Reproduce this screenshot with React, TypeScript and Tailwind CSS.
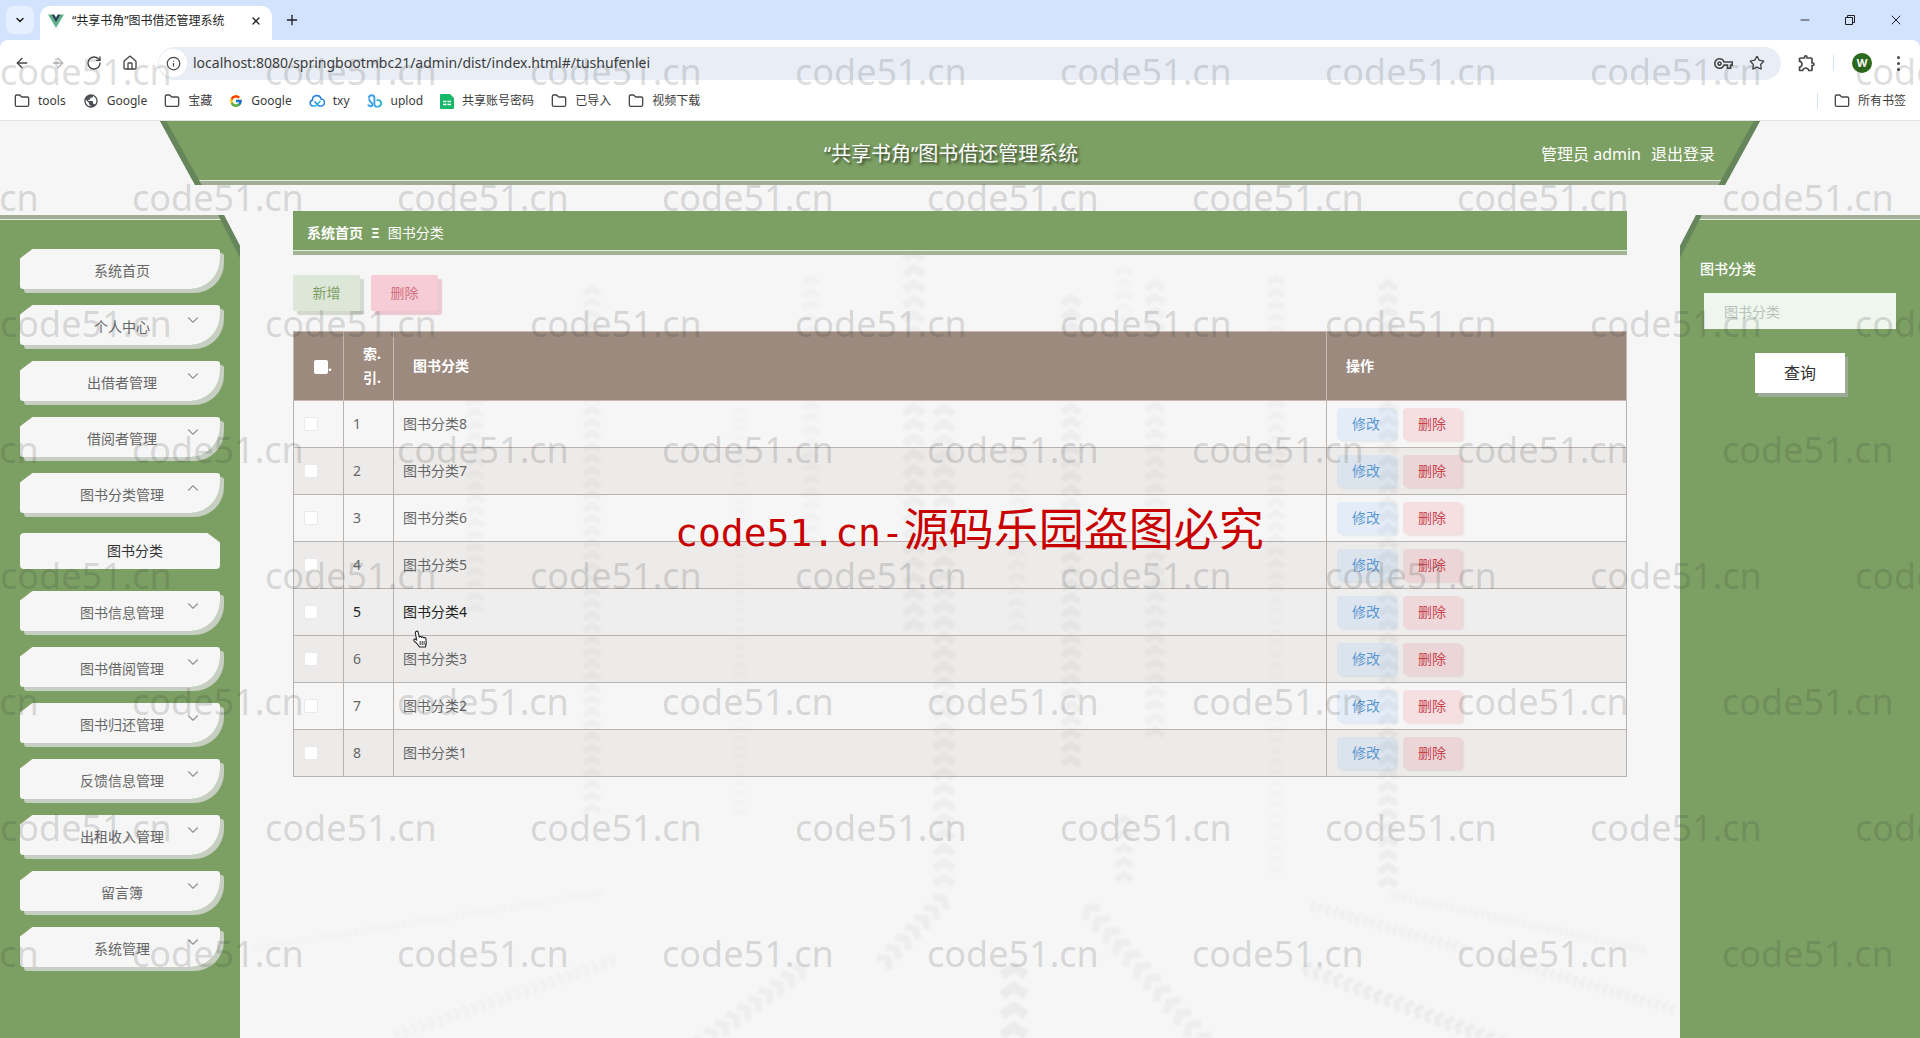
import React from "react";
import {
  ArrowLeft,
  ArrowRight,
  ChevronDown,
  ChevronUp,
  Folder,
  House,
  Info,
  Minus,
  Plus,
  RotateCw,
  Star,
  X,
} from "lucide-react";
import { FcGoogle } from "react-icons/fc";
import { MdOutlineExtension, MdOutlineVpnKey, MdPublic } from "react-icons/md";

const menuTop = ["系统首页", "个人中心", "出借者管理", "借阅者管理", "图书分类管理"];
const menuBottom = [
  "图书信息管理",
  "图书借阅管理",
  "图书归还管理",
  "反馈信息管理",
  "出租收入管理",
  "留言簿",
  "系统管理",
];
const rows = [8, 7, 6, 5, 4, 3, 2, 1].map((n, i) => ({ index: i + 1, name: `图书分类${n}` }));

/* Tyre tracks of the page background: x1, y1, x2, y2, chevron size, opacity */
const tracks: number[][] = [
  [475, 280, 475, 500, 8, 0.025],
  [592, 170, 592, 700, 8, 0.028],
  [740, 290, 740, 700, 6, 0.01],
  [811, 160, 811, 434, 8, 0.02],
  [914, 135, 914, 520, 10, 0.03],
  [944, 290, 944, 775, 10, 0.032],
  [942, 780, 876, 850, 9, 0.035],
  [1017, 330, 1017, 520, 8, 0.02],
  [1071, 180, 1071, 654, 9, 0.034],
  [1124, 150, 1124, 250, 8, 0.015],
  [1124, 700, 1124, 770, 8, 0.035],
  [1155, 165, 1155, 625, 9, 0.028],
  [1276, 160, 1276, 480, 8, 0.024],
  [1276, 480, 1276, 760, 7, 0.01],
  [1388, 165, 1388, 775, 9, 0.036],
  [800, 850, 690, 930, 9, 0.03],
  [1014, 850, 1014, 930, 12, 0.045],
  [1090, 790, 1212, 930, 10, 0.03],
  [1307, 848, 1510, 925, 7, 0.04],
  [1313, 785, 1470, 830, 5, 0.028],
  [1500, 838, 1680, 890, 5, 0.028],
  [1393, 774, 1650, 830, 4, 0.024],
  [600, 772, 249, 828, 4, 0.016],
  [612, 840, 388, 917, 6, 0.02],
];

function BackgroundTracks() {
  return (
    <svg
      className="pointer-events-none absolute inset-0 h-full w-full blur-[1px]"
      viewBox="0 0 1920 917"
      preserveAspectRatio="xMidYMid slice"
      fill="none"
      aria-hidden="true"
    >
      {tracks.map(([x1, y1, x2, y2, s, o], t) => {
        const len = Math.hypot(x2 - x1, y2 - y1);
        const angle = (Math.atan2(y2 - y1, x2 - x1) * 180) / Math.PI - 90;
        const count = Math.floor(len / (s * 1.5));
        return (
          <g key={t} stroke="#000" strokeOpacity={o} strokeWidth={s * 0.8}>
            {Array.from({ length: count }, (_, i) => (
              <path
                key={i}
                d={`M${-s} ${s * 0.35}L0 ${-s * 0.35}L${s} ${s * 0.35}`}
                transform={`translate(${x1 + ((x2 - x1) * i) / count} ${y1 + ((y2 - y1) * i) / count}) rotate(${angle})`}
              />
            ))}
          </g>
        );
      })}
    </svg>
  );
}

function Bookmark({ icon, label }: { icon: React.ReactNode; label: string }) {
  return (
    <a href="#" className="flex items-center gap-2 whitespace-nowrap">
      {icon}
      {label}
    </a>
  );
}

const folderIcon = <Folder size={16} strokeWidth={2} className="text-[#474747]" />;

function BrowserChrome() {
  return (
    <div className="bg-[#d3e3fd] text-[#1f1f1f]">
      <div className="flex h-10 items-end">
        <button
          aria-label="搜索标签页"
          className="mb-1.5 ml-1.5 grid h-7 w-7 place-items-center rounded-lg bg-[#e6effd]"
        >
          <ChevronDown size={12} strokeWidth={3} />
        </button>
        <div className="ml-1.5 flex h-[34px] w-[232px] items-center rounded-t-[10px] bg-white pr-2.5 pb-1 pl-2 text-xs">
          <svg width="16" height="16" viewBox="0 0 16 16" aria-hidden="true">
            <path d="M0 1.5h3.2L8 9.8l4.8-8.3H16L8 15z" fill="#5fb58b" />
            <path d="M3.2 1.5h3L8 4.6l1.8-3.1h3L8 9.8z" fill="#2f4659" />
          </svg>
          <span className="ml-2 flex-1 whitespace-nowrap">“共享书角”图书借还管理系统</span>
          <button aria-label="关闭标签页">
            <X size={12} strokeWidth={2.5} />
          </button>
        </div>
        <button aria-label="新标签页" className="mb-3 ml-3">
          <Plus size={16} strokeWidth={2} />
        </button>
        <div className="mb-3 ml-auto flex items-center gap-8 pr-4">
          <button aria-label="最小化">
            <Minus size={14} strokeWidth={1.5} />
          </button>
          <button aria-label="还原">
            <svg width="12" height="12" viewBox="0 0 12 12" fill="none" stroke="currentColor" aria-hidden="true">
              <path d="M1.5 3.5h7v7h-7zM3.5 3.5v-2h7v7h-2" />
            </svg>
          </button>
          <button aria-label="关闭">
            <X size={16} strokeWidth={1.5} />
          </button>
        </div>
      </div>

      <div className="rounded-t-lg border-b border-[#e2e2e2] bg-white">
        <div className="flex h-[46px] items-center pr-3.5 pl-3.5 text-[#474747]">
          <div className="flex items-center gap-5">
            <button aria-label="后退">
              <ArrowLeft size={16} />
            </button>
            <button aria-label="前进" className="text-[#b5b5b5]">
              <ArrowRight size={16} />
            </button>
            <button aria-label="重新加载">
              <RotateCw size={16} />
            </button>
            <button aria-label="主页">
              <House size={16} />
            </button>
          </div>
          <div className="ml-5 flex h-[33px] flex-1 items-center rounded-full bg-[#e9eef6] pr-4 pl-px">
            <span className="grid h-7 w-7 place-items-center rounded-full bg-white">
              <Info size={15} />
            </span>
            <input
              aria-label="地址"
              readOnly
              value="localhost:8080/springbootmbc21/admin/dist/index.html#/tushufenlei"
              className="ml-1.5 flex-1 bg-transparent text-sm text-[#3c3c3c] outline-none"
            />
            <MdOutlineVpnKey size={19} />
            <Star size={16} className="ml-4" />
          </div>
          <div className="ml-4 flex items-center">
            <MdOutlineExtension size={20} />
            <span className="ml-4 h-4 w-px bg-[#d3e3fd]" />
            <span className="ml-[18px] grid h-5 w-5 place-items-center rounded-full bg-[#2b6a1c] text-[11px] font-bold text-white">
              W
            </span>
            <button aria-label="菜单" className="ml-[18px] flex w-4 flex-col items-center gap-[3px]">
              <i className="h-[3px] w-[3px] rounded-full bg-[#474747]" />
              <i className="h-[3px] w-[3px] rounded-full bg-[#474747]" />
              <i className="h-[3px] w-[3px] rounded-full bg-[#474747]" />
            </button>
          </div>
        </div>
        <div className="flex h-[34px] items-start gap-[17px] pt-[3px] pr-3.5 pl-3.5 text-xs leading-6 text-[#3c3c3c]">
          <Bookmark icon={folderIcon} label="tools" />
          <Bookmark icon={<MdPublic size={16} className="text-[#4d5156]" />} label="Google" />
          <Bookmark icon={folderIcon} label="宝藏" />
          <Bookmark icon={<FcGoogle size={14} />} label="Google" />
          <Bookmark
            icon={
              <svg width="16" height="14" viewBox="0 0 16 14" fill="none" strokeWidth="1.6" aria-hidden="true">
                <path d="M4 12a3 3 0 0 1-.5-5.9A4.3 4.3 0 0 1 12 5a3.5 3.5 0 0 1 0 7H10L5.500 7.500" stroke="#2a86e0" />
                <path d="M4 12h2.500l5-5" stroke="#22b8dc" />
              </svg>
            }
            label="txy"
          />
          <Bookmark
            icon={
              <svg width="16" height="14" viewBox="0 0 16 14" fill="none" strokeWidth="1.9" aria-hidden="true">
                <path d="M2 4a2.700 2.700 0 1 1 5.400 0v6.500a2.200 2.200 0 0 0 3 2" stroke="#3a9fe8" />
                <path d="M1 10.500c1 2.500 4.500 2 4.500 0 0-1.800-3.300-2.500-3.500-6" stroke="#3a9fe8" />
                <path d="M9.500 6.500a3.200 3.200 0 1 1 1 6" stroke="#27b5c9" />
              </svg>
            }
            label="uplod"
          />
          <Bookmark
            icon={
              <svg width="14" height="15" viewBox="0 0 14 15" aria-hidden="true">
                <path d="M1 0h9l4 4v10a1 1 0 0 1-1 1H1a1 1 0 0 1-1-1V1a1 1 0 0 1 1-1z" fill="#14b866" />
                <path d="M3 7.500h3.500M7.500 7.500H11M3 10.500h3.500M7.500 10.500H11" stroke="#fff" strokeWidth="1.500" />
              </svg>
            }
            label="共享账号密码"
          />
          <Bookmark icon={folderIcon} label="已导入" />
          <Bookmark icon={folderIcon} label="视频下载" />
          <div className="ml-auto flex items-center gap-4">
            <span className="h-4 w-px bg-[#d3e3fd]" />
            <Bookmark icon={folderIcon} label="所有书签" />
          </div>
        </div>
      </div>
    </div>
  );
}

function MenuItem({ label, arrow }: { label: string; arrow?: "up" | "down" }) {
  return (
    <button className="relative mb-4 block h-10 w-[200px] rounded-[3px] rounded-br-[30px] bg-[linear-gradient(143deg,transparent_7px,#f6f6f6_8px)] pt-1 pl-1 text-center text-sm text-[#666] shadow-[4px_4px_0_#c6cfc2]">
      {label}
      {arrow === "down" && (
        <ChevronDown size={18} strokeWidth={1.5} className="absolute top-1.5 right-[18px] text-[#909399]" />
      )}
      {arrow === "up" && (
        <ChevronUp size={18} strokeWidth={1.5} className="absolute top-1.5 right-[18px] text-[#909399]" />
      )}
    </button>
  );
}

function Sidebar() {
  return (
    <nav className="mt-[30px] w-60 shrink-0 bg-[linear-gradient(243deg,#67855a_19px,transparent_20px),linear-gradient(180deg,#a2ae98_4px,#e3edda_4px,#e3edda_5px,#7ca063_5px)] pt-[34px] pl-5 [clip-path:polygon(0_0,calc(100%-16px)_0,100%_31px,100%_100%,0_100%)]">
      {menuTop.map((m, i) => (
        <MenuItem key={m} label={m} arrow={i === 0 ? undefined : i === 4 ? "up" : "down"} />
      ))}
      <a
        href="#/tushufenlei"
        className="mt-5 mb-[22px] block h-9 w-[200px] rounded bg-[linear-gradient(217deg,transparent_7px,#f6f6f6_8px)] pl-[30px] text-center text-sm leading-9 text-[#333]"
      >
        图书分类
      </a>
      {menuBottom.map((m) => (
        <MenuItem key={m} label={m} arrow="down" />
      ))}
    </nav>
  );
}

function CategoryTable() {
  return (
    <table className="mt-5 w-full table-fixed border-collapse border border-[#b9b2ae] text-left text-sm">
      <colgroup>
        <col className="w-[50px]" />
        <col className="w-[50px]" />
        <col />
        <col className="w-[300px]" />
      </colgroup>
      <thead>
        <tr className="h-[69px] bg-[#9c8a7f] font-bold text-white">
          <th className="border border-[#c4b8b0] pl-5">
            <span className="flex items-end">
              <input
                type="checkbox"
                aria-label="全选"
                className="h-3.5 w-3.5 shrink-0 appearance-none rounded-[2px] bg-white"
              />
              <span className="leading-4">.</span>
            </span>
          </th>
          <th className="border border-[#c4b8b0] pl-[19px] leading-6">
            索.
            <br />
            引.
          </th>
          <th className="border border-[#c4b8b0] pl-[19px]">图书分类</th>
          <th className="border border-[#c4b8b0] pl-[19px]">操作</th>
        </tr>
      </thead>
      <tbody>
        {rows.map((r) => (
          <tr
            key={r.index}
            className={
              "h-[47px] " +
              (r.index === 5
                ? "bg-[#000]/3 text-[#222]"
                : r.index % 2 === 0
                  ? "bg-[#3c2814]/5 text-[#666]"
                  : "text-[#666]")
            }
          >
            <td className="border border-[#b9b2ae] pl-2.5">
              <input
                type="checkbox"
                aria-label={`选择 ${r.name}`}
                className="block h-3.5 w-3.5 appearance-none rounded-[2px] border border-[#e9e9ec] bg-white"
              />
            </td>
            <td className="border border-[#b9b2ae] pl-[9px]">{r.index}</td>
            <td className="border border-[#b9b2ae] pl-[9px]">{r.name}</td>
            <td className="border border-[#b9b2ae] pl-2.5">
              <div className="flex gap-2">
                <button className="h-8 w-[58px] rounded bg-[#409eff]/10 text-[#5b97d3] shadow-[3px_2px_2px_rgba(90,140,190,0.12)]">
                  修改
                </button>
                <button className="h-8 w-[58px] rounded bg-[#f03c46]/12 text-[#c9434f] shadow-[3px_2px_2px_rgba(200,80,90,0.14)]">
                  删除
                </button>
              </div>
            </td>
          </tr>
        ))}
      </tbody>
    </table>
  );
}

function SearchPanel() {
  return (
    <aside className="mt-[30px] w-60 shrink-0 bg-[linear-gradient(117deg,#67855a_19px,transparent_20px),linear-gradient(180deg,#a2b09c_4px,#e3edda_4px,#e3edda_5px,#7ca063_5px)] px-5 pt-11 [clip-path:polygon(16px_0,100%_0,100%_100%,0_100%,0_31px)]">
      <label htmlFor="category" className="block text-sm font-medium text-white">
        图书分类
      </label>
      <input
        id="category"
        placeholder="图书分类"
        className="mt-3.5 ml-1 block h-9 w-48 bg-[#eef6ee] px-5 text-sm outline-none placeholder:text-[#b9c3b9]"
      />
      <button className="mx-auto mt-6 block h-10 w-[90px] bg-white text-base text-[#333] shadow-[3px_4px_0_#9daa96]">
        查询
      </button>
    </aside>
  );
}

function Watermarks() {
  return (
    <div className="pointer-events-none absolute inset-0 overflow-hidden pt-[9px]" aria-hidden="true">
      {[0, 1, 2, 3, 4, 5, 6, 7].map((row) => (
        <div key={row} className={"flex h-[126px] " + (row % 2 === 0 ? "-ml-[265px]" : "-ml-[133px]")}>
          {[0, 1, 2, 3, 4, 5, 6, 7, 8].map((c) => (
            <span
              key={c}
              className="w-[265px] shrink-0 text-[36px] leading-[126px] text-[#303030]/18"
            >
              code51.cn
            </span>
          ))}
        </div>
      ))}
    </div>
  );
}

export default function App() {
  return (
    <div className="relative flex min-h-screen flex-col overflow-hidden bg-[#f6f6f6] font-['Noto_Sans','Noto_Sans_CJK_SC',sans-serif]">
      <BrowserChrome />
      <div className="relative flex flex-1 flex-col">
        <BackgroundTracks />
        <header className="relative mx-40 grid h-16 shrink-0 grid-cols-3 items-center bg-[linear-gradient(61deg,#67855a_36px,transparent_37px),linear-gradient(299deg,#67855a_36px,transparent_37px),linear-gradient(180deg,#7ca063_59px,#e3edda_59px,#e3edda_60px,#a2ae98_60px)] px-[45px] pt-0.5 text-white [clip-path:polygon(0_0,100%_0,calc(100%-35px)_100%,35px_100%)]">
          <h1 className="col-start-2 pr-[18px] text-center text-xl [text-shadow:2px_2px_3px_rgba(0,0,0,0.6)]">
            “共享书角”图书借还管理系统
          </h1>
          <div className="flex justify-end gap-2.5 text-base">
            <span>管理员 admin</span>
            <a href="#/login">退出登录</a>
          </div>
        </header>
        <div className="relative flex flex-1">
          <Sidebar />
          <main className="min-w-0 flex-1 px-[53px] pt-[26px]">
            <div className="flex h-11 items-center gap-2 bg-[linear-gradient(180deg,#7ca063_39px,#e3edda_39px,#e3edda_40px,#a2b495_40px)] px-3.5 text-sm text-white">
              <a href="#/" className="font-bold">
                系统首页
              </a>
              <span className="font-bold">Ξ</span>
              <span>图书分类</span>
            </div>
            <div className="mt-5 flex gap-[11px] text-sm">
              <button className="h-9 w-[67px] rounded-[2px] bg-[#dde7d8] text-[#7ca063] shadow-[4px_4px_1px_#d3d9ce]">
                新增
              </button>
              <button className="h-9 w-[67px] rounded-[2px] bg-[#f6ccd6] text-[#d4707f] shadow-[4px_4px_1px_#ecc9d0]">
                删除
              </button>
            </div>
            <CategoryTable />
          </main>
          <SearchPanel />
        </div>
      </div>
      <Watermarks />
      <p className="pointer-events-none absolute top-[497px] left-[675px] font-['Noto_Sans_CJK_SC',sans-serif] text-[45px] leading-[60px] whitespace-nowrap text-[#c80000]">
        <span className="font-['DejaVu_Sans_Mono',monospace] text-[38px]">code51.cn-</span>
        源码乐园盗图必究
      </p>
      <svg
        className="pointer-events-none absolute top-[630px] left-[412px]"
        width="17"
        height="19"
        viewBox="0 0 17 19"
        aria-hidden="true"
      >
        <path
          d="M4 1.500c1.200-.8 2 0 2.200 1l1 4.500c.8-.8 2-.6 2.300.3.800-.7 2-.4 2.300.5.900-.5 2 0 2.100 1 .4 2.600.9 5-.5 8.200H7.500C6 14 3.500 12.500 2 10.800c-.8-1 .4-2.200 1.600-1.500l1 .6L3.400 3c-.1-.6.100-1.200.6-1.500z"
          fill="#fff"
          stroke="#222"
          strokeWidth="1.100"
        />
        <path d="M8.200 11v4M10.200 11v4M12.100 11v4" stroke="#222" strokeWidth="0.900" />
      </svg>
    </div>
  );
}
